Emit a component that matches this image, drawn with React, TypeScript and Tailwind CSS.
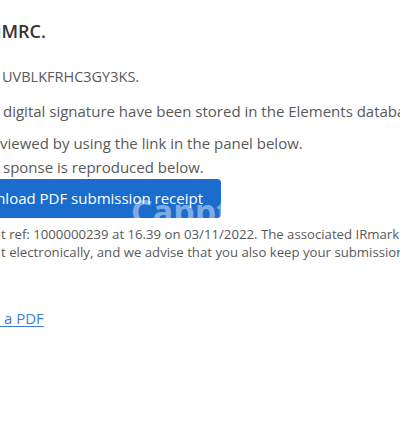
import React from "react";

export default function App() {
  return (
    <div className="w-[400px] h-[424px] overflow-hidden bg-white font-['Open_Sans',sans-serif] text-[#595959]">
      <div className="flex flex-col whitespace-nowrap">
        <p className="mt-[19px] -ml-[12px] text-[18px] leading-[24px] font-semibold text-[#333333]">HMRC.</p>
        <p className="mt-[24px] ml-[2px] text-[14.5px] leading-[20px]">UVBLKFRHC3GY3KS.</p>
        <p className="mt-[14px] ml-[3px] text-[15px] leading-[20px]">
          digital signature have been stored in the Elements database
        </p>
        <p className="mt-[11px] ml-[0px] text-[15px] leading-[23px]">viewed by using the link in the panel below.</p>
        <p className="ml-[3px] text-[15px] leading-[24px]">sponse is reproduced below.</p>
        <div className="relative -ml-[60px] w-[281px] h-[39px] rounded-[4px] bg-[#1a6dcc] overflow-hidden flex items-center justify-end pr-[18px]">
          <span className="text-[15px] text-white">Download PDF submission receipt</span>
          <span className="absolute left-[191px] top-[15px] text-[34px] leading-[34px] font-bold text-white/45">
            Capptions
          </span>
        </div>
        <p className="mt-[7px] ml-[1px] text-[13.2px] leading-[18px]">
          t ref: 1000000239 at 16.39 on 03/11/2022. The associated IRmark was
        </p>
        <p className="ml-[1px] text-[13.2px] leading-[18px]">
          t electronically, and we advise that you also keep your submission receipt
        </p>
        <p className="mt-[47px] text-[15px] leading-[20px]">
          <a className="text-[#3b7fd4] underline underline-offset-2">&nbsp;a PDF</a>
        </p>
      </div>
    </div>
  );
}
